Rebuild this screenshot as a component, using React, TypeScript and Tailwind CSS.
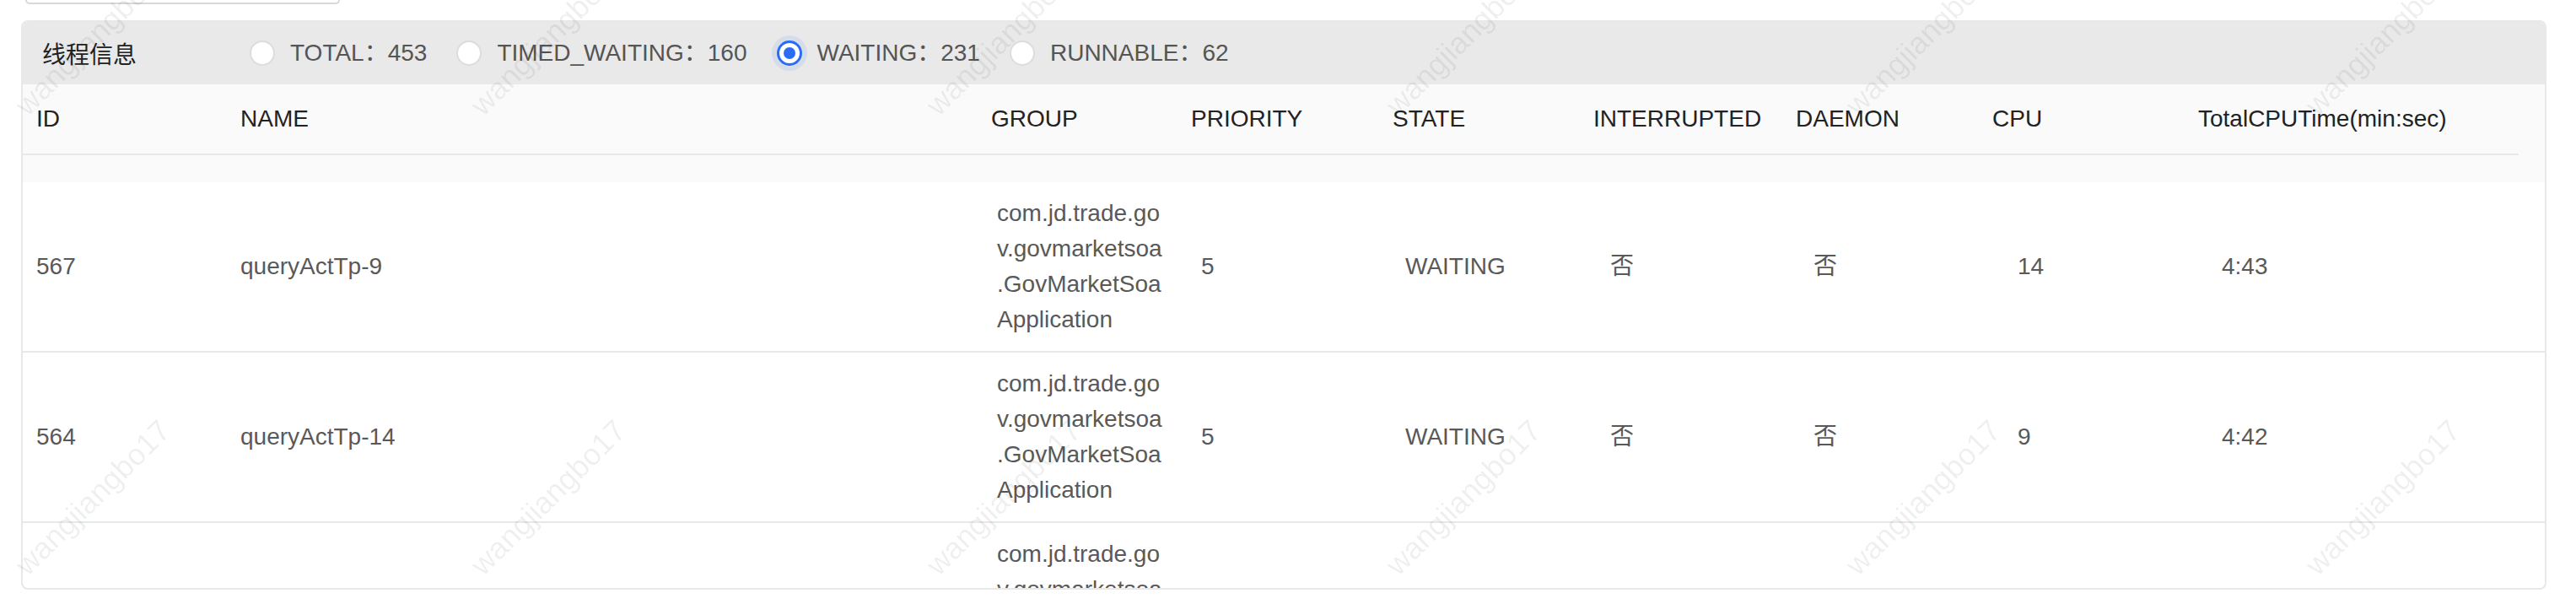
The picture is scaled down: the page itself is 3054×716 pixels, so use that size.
import React from 'react';

const headerCols = [
  { label: 'ID', w: 'w-[242px]' },
  { label: 'NAME', w: 'w-[890px]' },
  { label: 'GROUP', w: 'w-[237px]' },
  { label: 'PRIORITY', w: 'w-[239px]' },
  { label: 'STATE', w: 'w-[238px]' },
  { label: 'INTERRUPTED', w: 'w-[240px]' },
  { label: 'DAEMON', w: 'w-[233px]' },
  { label: 'CPU', w: 'w-[244px]' },
  { label: 'TotalCPUTime(min:sec)', w: 'w-[396px]' },
];

const bodyW = [
  'w-[242px]',
  'w-[897px]',
  'w-[242px]',
  'w-[242px]',
  'w-[243px]',
  'w-[241px]',
  'w-[242px]',
  'w-[242px]',
  'w-[399px]',
];

const group = ['com.jd.trade.go', 'v.govmarketsoa', '.GovMarketSoa', 'Application'];

const rows = [
  { id: '567', name: 'queryActTp-9', pr: '5', state: 'WAITING', intr: '否', daemon: '否', cpu: '14', time: '4:43' },
  { id: '564', name: 'queryActTp-14', pr: '5', state: 'WAITING', intr: '否', daemon: '否', cpu: '9', time: '4:42' },
  { id: '563', name: 'queryActTp-13', pr: '5', state: 'WAITING', intr: '否', daemon: '否', cpu: '9', time: '4:41' },
];

const radios = [
  { label: 'TOTAL：453', checked: false },
  { label: 'TIMED_WAITING：160', checked: false },
  { label: 'WAITING：231', checked: true },
  { label: 'RUNNABLE：62', checked: false },
];

const marks: { x: number; y: number }[] = [];
[45, 590].forEach((y) => {
  [110, 650, 1190, 1735, 2280, 2825].forEach((x) => marks.push({ x, y }));
});

function Radio({ checked }: { checked: boolean }) {
  if (checked) {
    return (
      <span className="flex h-[30px] w-[30px] shrink-0 items-center justify-center rounded-full border-[3px] border-[#2b6cf5] bg-white shadow-[0_0_0_6px_rgba(43,108,245,0.1)]">
        <span className="h-[14px] w-[14px] rounded-full bg-[#2b6cf5]" />
      </span>
    );
  }
  return <span className="h-[30px] w-[30px] shrink-0 rounded-full border-2 border-[#dcdcdc] bg-white" />;
}

export default function App() {
  return (
    <div className="relative h-[716px] w-[3054px] overflow-hidden bg-white font-['Liberation_Sans','Noto_Sans_CJK_SC',sans-serif] text-[28px]">
      <div className="ml-[30px] h-[5px] w-[373px] rounded-b-[8px] border-2 border-t-0 border-[#d9d9d9]" />
      <div className="ml-[25px] mt-[19px] flex h-[675px] w-[2994px] flex-col overflow-hidden rounded-[8px] border-2 border-[#e8e8e8]">
        <div className="flex h-[74px] shrink-0 items-center bg-[#e9e9e9] pl-[23px]">
          <span className="w-[112px] text-[#222] font-['Noto_Sans_CJK_SC',sans-serif] leading-none">线程信息</span>
          <div className="ml-[134px] flex items-center gap-[35px]">
            {radios.map((r) => (
              <div key={r.label} className="flex items-center gap-[18px]">
                <Radio checked={r.checked} />
                <span className="leading-none text-[#555]">{r.label}</span>
              </div>
            ))}
          </div>
        </div>
        <div className="flex shrink-0 bg-[#fafafa]">
          <div className="flex h-[84px] w-[2959px] items-center border-b-2 border-[#e8e8e8]">
            {headerCols.map((c) => (
              <div key={c.label} className={`${c.w} shrink-0 pl-[16px] text-[#222]`}>
                {c.label}
              </div>
            ))}
          </div>
        </div>
        <div className="h-[32px] shrink-0 bg-[#fafafa]" />
        <div className="flex-1 overflow-hidden">
          {rows.map((r) => {
            const cells = [r.id, r.name, null, r.pr, r.state, r.intr, r.daemon, r.cpu, r.time];
            return (
              <div key={r.id} className="flex items-center border-b-2 border-[#e8e8e8] py-[16px] text-[#595959]">
                {cells.map((v, i) => (
                  <div key={i} className={`${bodyW[i]} shrink-0 pl-[16px] leading-[42px]`}>
                    {i === 2 ? group.map((g) => <div key={g}>{g}</div>) : v}
                  </div>
                ))}
              </div>
            );
          })}
        </div>
      </div>
      <div className="pointer-events-none absolute inset-0">
        {marks.map((m, i) => (
          <span
            key={i}
            className="absolute -translate-x-1/2 -translate-y-1/2 -rotate-45 whitespace-nowrap text-[36px] text-[rgba(0,0,0,0.07)] font-['Liberation_Sans',sans-serif]"
            style={{ left: m.x, top: m.y }}
          >
            wangjiangbo17
          </span>
        ))}
      </div>
    </div>
  );
}
